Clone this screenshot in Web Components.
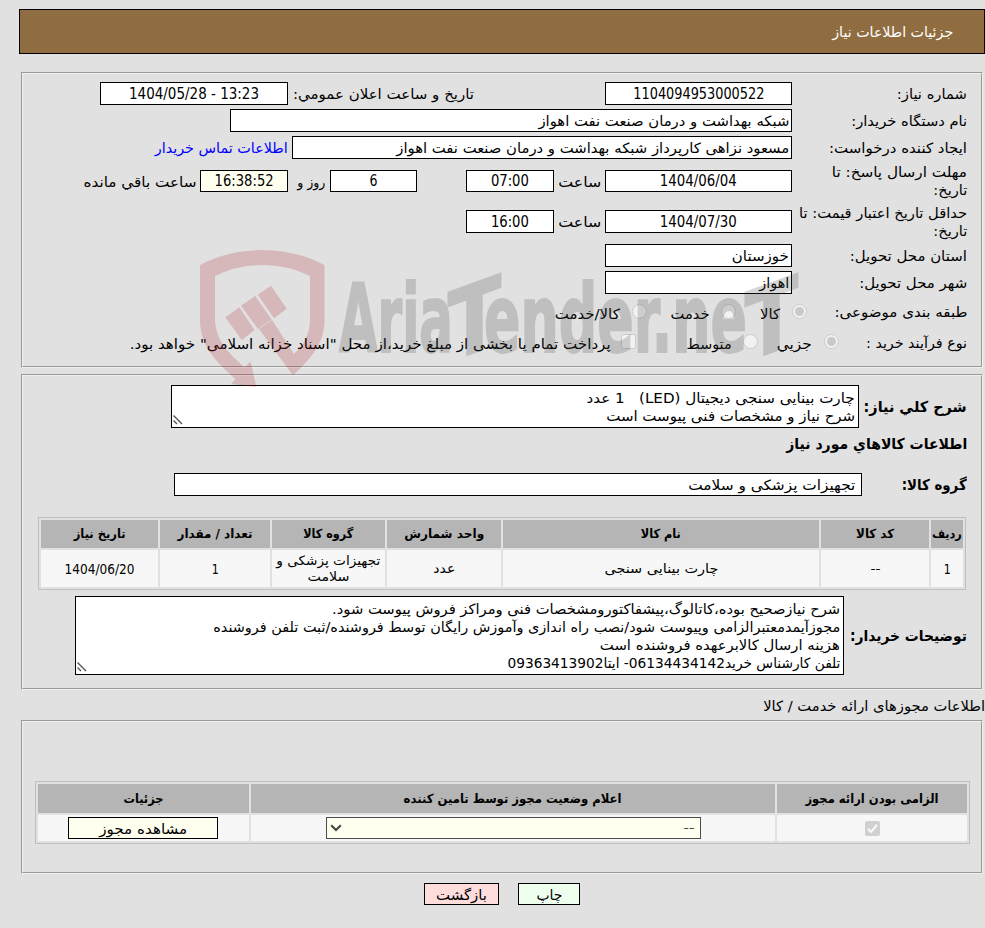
<!DOCTYPE html>
<html lang="fa" dir="rtl">
<head>
<meta charset="utf-8">
<title>جزئیات اطلاعات نیاز</title>
<style>
html,body{margin:0;padding:0;background:#e1e1e1}
body{width:985px;height:928px;overflow:hidden;position:relative;font:14px/18px "DejaVu Sans Condensed","DejaVu Sans","Noto Sans",sans-serif;color:#000}
</style>
</head>
<body>
<page-title><fit-text w="121">جزئیات اطلاعات نیاز</fit-text></page-title>

<group-box h="296" style="margin-top:18px">
  <form-row h="27" style="margin-top:6px">
    <form-label><fit-text w="70">شماره نیاز:</fit-text></form-label>
    <value-box w="187" center><fit-text size="15" w="131">1104094953000522</fit-text></value-box>
    <fit-text w="181" gap="131">تاریخ و ساعت اعلان عمومي:</fit-text>
    <value-box w="188" gap="5" center><fit-text size="15" w="130" dir="ltr">1404/05/28 - 13:23</fit-text></value-box>
  </form-row>
  <form-row h="27">
    <form-label><fit-text w="116">نام دستگاه خریدار:</fit-text></form-label>
    <value-box w="562"><fit-text w="251">شبکه بهداشت و درمان صنعت نفت اهواز</fit-text></value-box>
  </form-row>
  <form-row h="27">
    <form-label><fit-text w="138">ایجاد کننده درخواست:</fit-text></form-label>
    <value-box w="500"><fit-text w="393">مسعود نزاهی کارپرداز شبکه بهداشت و درمان صنعت نفت اهواز</fit-text></value-box>
    <fit-text w="133" gap="4" style="color:#00f">اطلاعات تماس خریدار</fit-text>
  </form-row>
  <form-row h="40">
    <form-label><fit-text w="135">مهلت ارسال پاسخ: تا</fit-text><fit-text w="34">تاریخ:</fit-text></form-label>
    <value-box w="187" h="22" center><fit-text size="15" w="77">1404/06/04</fit-text></value-box>
    <fit-text w="43" gap="4" dy="1">ساعت</fit-text>
    <value-box w="88" h="22" gap="4" center><fit-text size="15" w="38">07:00</fit-text></value-box>
    <value-box w="87" h="22" gap="49" center><fit-text size="15" w="8">6</fit-text></value-box>
    <fit-text w="28" gap="5" dy="1">روز و</fit-text>
    <value-box w="88" h="22" gap="9" center style="--fill:#fffff0"><fit-text size="15" w="59">16:38:52</fit-text></value-box>
    <fit-text w="113" gap="4" dy="1">ساعت باقي مانده</fit-text>
  </form-row>
  <form-row h="41">
    <form-label><fit-text w="168">حداقل تاریخ اعتبار قیمت: تا</fit-text><fit-text w="34">تاریخ:</fit-text></form-label>
    <value-box w="187" center><fit-text size="15" w="77" dy="1">1404/07/30</fit-text></value-box>
    <fit-text w="43" gap="4" dy="1">ساعت</fit-text>
    <value-box w="88" gap="4" center><fit-text size="15" w="38" dy="1">16:00</fit-text></value-box>
  </form-row>
  <form-row h="27">
    <form-label><fit-text w="117">استان محل تحویل:</fit-text></form-label>
    <value-box w="187"><fit-text w="57">خوزستان</fit-text></value-box>
  </form-row>
  <form-row h="27">
    <form-label><fit-text w="108">شهر محل تحویل:</fit-text></form-label>
    <value-box w="187"><fit-text w="30">اهواز</fit-text></value-box>
  </form-row>
  <form-row h="31">
    <fit-text w="133" dy="1">طبقه بندی موضوعی:</fit-text>
    <choice-mark gap="27" on></choice-mark><fit-text w="20" gap="12" dy="3">کالا</fit-text>
    <choice-mark gap="24"></choice-mark><fit-text w="39" gap="11" dy="3">خدمت</fit-text>
    <choice-mark gap="24"></choice-mark><fit-text w="65" gap="12" dy="3">کالا/خدمت</fit-text>
  </form-row>
  <form-row h="28">
    <fit-text w="101" dy="2">نوع فرآیند خرید :</fit-text>
    <choice-mark gap="27" on></choice-mark><fit-text w="35" gap="12" dy="4">جزیي</fit-text>
    <choice-mark gap="19"></choice-mark><fit-text w="45" gap="11" dy="4">متوسط</fit-text>
    <choice-mark gap="51" square></choice-mark><fit-text w="481" gap="10" dy="4">پرداخت تمام یا بخشی از مبلغ خرید،از محل "اسناد خزانه اسلامی" خواهد بود.</fit-text>
  </form-row>
</group-box>

<group-box h="316" style="margin-top:6px">
  <form-row h="43" style="margin-top:9px">
    <fit-text w="103" size="15" bold>شرح کلي نیاز:</fit-text>
    <note-area w="688" h="43" gap="5"><fit-text w="268">چارت بینایی سنجی دیجیتال (LED) &nbsp; 1 عدد</fit-text><fit-text w="249">شرح نیاز و مشخصات فنی پیوست است</fit-text></note-area>
  </form-row>
  <form-row h="31"><fit-text w="181" size="15" bold>اطلاعات کالاهاي مورد نیاز</fit-text></form-row>
  <form-row h="51">
    <fit-text w="65" size="15" bold>گروه کالا:</fit-text>
    <value-box w="688" gap="40" style="--pad:6px"><fit-text w="167">تجهیزات پزشکی و سلامت</fit-text></value-box>
  </form-row>
  <data-grid cols="32 108 316 114 113 110 117" rows="28 37" style="margin:7px 15px 0 0">
    <grid-cell head><fit-text w="30" size="12.5" bold>ردیف</fit-text></grid-cell>
    <grid-cell head><fit-text w="38" size="12.5" bold>کد کالا</fit-text></grid-cell>
    <grid-cell head><fit-text w="40" size="12.5" bold>نام کالا</fit-text></grid-cell>
    <grid-cell head><fit-text w="80" size="12.5" bold>واحد شمارش</fit-text></grid-cell>
    <grid-cell head><fit-text w="50" size="12.5" bold>گروه کالا</fit-text></grid-cell>
    <grid-cell head><fit-text w="75" size="12.5" bold>تعداد / مقدار</fit-text></grid-cell>
    <grid-cell head><fit-text w="52" size="12.5" bold>تاریخ نیاز</fit-text></grid-cell>
    <grid-cell><fit-text w="7" size="13.5">1</fit-text></grid-cell>
    <grid-cell><fit-text w="10" size="13">--</fit-text></grid-cell>
    <grid-cell><fit-text w="114" size="13">چارت بینایی سنجی</fit-text></grid-cell>
    <grid-cell><fit-text w="22" size="13">عدد</fit-text></grid-cell>
    <grid-cell><fit-text w="104" size="13" lh="16">تجهیزات پزشکی و</fit-text><fit-text w="42" size="13" lh="16">سلامت</fit-text></grid-cell>
    <grid-cell><fit-text w="7" size="13.5">1</fit-text></grid-cell>
    <grid-cell><fit-text w="70" size="13.5">1404/06/20</fit-text></grid-cell>
  </data-grid>
  <form-row h="79" style="margin-top:6px">
    <fit-text w="117" size="15" bold>توضیحات خریدار:</fit-text>
    <note-area w="769" h="79" gap="6"><fit-text w="508">شرح نیازصحیح بوده،کاتالوگ،پیشفاکتورومشخصات فنی ومراکز فروش پیوست شود.</fit-text><fit-text w="627">مجوزآیمدمعتبرالزامی وپیوست شود/نصب راه اندازی وآموزش رایگان توسط فروشنده/ثبت تلفن فروشنده</fit-text><fit-text w="240">هزینه ارسال کالابرعهده فروشنده است</fit-text><fit-text w="333">تلفن کارشناس خرید06134434142- ایتا09363413902</fit-text></note-area>
  </form-row>
</group-box>

<section-caption><fit-text w="222">اطلاعات مجوزهای ارائه خدمت / کالا</fit-text></section-caption>

<group-box h="154">
  <data-grid cols="190 524 211" rows="29 26" style="margin:59px 11px 0 0">
    <grid-cell head><fit-text w="133" size="12.5" bold>الزامی بودن ارائه مجوز</fit-text></grid-cell>
    <grid-cell head><fit-text w="218" size="12.5" bold>اعلام وضعیت مجوز توسط تامین کننده</fit-text></grid-cell>
    <grid-cell head><fit-text w="40" size="12.5" bold>جزئیات</fit-text></grid-cell>
    <grid-cell><choice-mark checked></choice-mark></grid-cell>
    <grid-cell><drop-list><fit-text w="11" size="13">--</fit-text></drop-list></grid-cell>
    <grid-cell style="padding-left:0;padding-right:1px"><push-button w="150" fill="#fffff0"><fit-text w="88">مشاهده مجوز</fit-text></push-button></grid-cell>
  </data-grid>
</group-box>

<button-bar>
  <push-button w="62" fill="#eeffee"><fit-text w="26">چاپ</fit-text></push-button>
  <push-button w="75" fill="#ffdddd"><fit-text w="51">بازگشت</fit-text></push-button>
</button-bar>

<brand-mark></brand-mark>

<script>
function define(name, css, html, setup) {
  const tpl = document.createElement('template');
  tpl.innerHTML = '<style>:host{box-sizing:border-box}' + css + '</style>' + html;
  customElements.define(name, class extends HTMLElement {
    connectedCallback() {
      if (this.shadowRoot) return;
      this.attachShadow({mode: 'open'}).append(tpl.content.cloneNode(true));
      const gap = this.getAttribute('gap');
      if (gap) this.style.marginInlineStart = gap + 'px';
      if (setup) setup(this, n => this.getAttribute(n));
    }
  });
}

define('page-title',
  ':host{display:flex;align-items:center;height:45px;margin:9px 0 0 19px;padding-inline-start:31px;border:1px solid #000;background:#8f6d40;color:#fff}',
  '<slot></slot>');

/* Panel with a two-tone engraved frame */
define('group-box',
  ':host{display:block;margin:0 2px 0 21px;border:1px solid;border-color:#9a9a9a #f0f0f0 #f0f0f0 #9a9a9a}' +
  '.in{box-sizing:border-box;display:flow-root;height:100%;border:1px solid;border-color:#f0f0f0 #9a9a9a #9a9a9a #f0f0f0}',
  '<div class="in"><slot></slot></div>',
  (el, a) => { el.style.height = a('h') + 'px'; });

define('form-row', ':host{display:flex;align-items:center;padding-inline-start:14px;white-space:nowrap}', '<slot></slot>',
  (el, a) => { el.style.height = a('h') + 'px'; });

define('form-label', ':host{display:flex;flex-direction:column;align-items:flex-start;flex:none;width:175px}', '<slot></slot>');

define('value-box',
  ':host{display:flex;flex:none;align-items:center;height:23px;border:1px solid #000;background:var(--fill,#fff);padding:0 var(--pad,2px)}:host([center]){justify-content:center}',
  '<slot></slot>',
  (el, a) => { el.style.width = a('w') + 'px'; if (a('h')) el.style.height = a('h') + 'px'; });

define('note-area',
  ':host{display:flex;flex-direction:column;align-items:flex-start;position:relative;flex:none;border:1px solid #000;background:#fff;padding:3px 3px 0}' +
  'svg{position:absolute;left:1px;bottom:2px}',
  '<slot></slot><svg width="10" height="10" viewBox="0 0 10 10" stroke="#555" stroke-width="1.4"><path d="M.5.5 9 9M.5 5.5 4 9"/></svg>',
  (el, a) => { el.style.width = a('w') + 'px'; el.style.height = a('h') + 'px'; });

define('data-grid',
  ':host{display:grid;width:max-content;gap:2px;padding:2px;border:1px solid #bfbfbf}', '<slot></slot>',
  (el, a) => {
    el.style.gridTemplateColumns = a('cols').split(' ').join('px ') + 'px';
    el.style.gridTemplateRows = a('rows').split(' ').join('px ') + 'px';
  });

define('grid-cell',
  ':host{display:flex;flex-direction:column;align-items:center;justify-content:center;background:#f7f7f7}:host([head]){background:#b5b5b5}',
  '<slot></slot>');

/* Disabled radio button or checkbox */
define('choice-mark',
  ':host{display:block;flex:none;width:15px;height:15px}svg{display:block}', '<svg width="15" height="15" viewBox="0 0 15 15"></svg>',
  (el, a) => {
    const svg = el.shadowRoot.querySelector('svg');
    if (a('checked') !== null)
      svg.innerHTML = '<rect width="15" height="15" rx="2" fill="#d0d0d0"/><path d="M3 7.8 6 11 12 3.8" fill="none" stroke="#fafafa" stroke-width="2"/>';
    else if (a('square') !== null)
      svg.innerHTML = '<rect x=".5" y=".5" width="14" height="14" rx="2" fill="#f2f2f2" stroke="#cbcbcb"/>';
    else
      svg.innerHTML = '<circle cx="7.5" cy="7.5" r="7" fill="#f2f2f2" stroke="#cbcbcb"/>' +
        (a('on') !== null ? '<circle cx="7.5" cy="7.5" r="4.5" fill="#c9c9c9"/>' : '');
  });

define('drop-list',
  ':host{display:flex;align-items:center;justify-content:space-between;width:375px;height:22px;border:1px solid #4c4c4c;background:#fffff0;color:#444;padding:0 5px 0 3px}',
  '<slot></slot><svg width="12" height="8" viewBox="0 0 12 8"><path d="M1.2 1.2 6 6 10.8 1.2" fill="none" stroke="#444" stroke-width="2"/></svg>');

define('push-button',
  'button{all:unset;box-sizing:border-box;display:flex;align-items:center;justify-content:center;width:100%;height:100%;padding-top:2px;border:1px solid #000;background:var(--fill)}:host{display:block;height:22px}',
  '<button type="button"><slot></slot></button>',
  (el, a) => { el.style.width = a('w') + 'px'; el.style.setProperty('--fill', a('fill')); });

define('section-caption', ':host{display:flex;align-items:center;height:30px;padding-top:1px}', '<slot></slot>');

define('button-bar', ':host{display:flex;gap:19px;margin-top:9px;padding-inline-start:405px}', '<slot></slot>');

define('brand-mark',
  ':host{position:absolute;left:195px;top:245px;width:610px;height:145px;pointer-events:none;direction:ltr}svg{display:block;overflow:visible}text{font-family:"DejaVu Sans Condensed","DejaVu Sans",sans-serif;font-weight:bold}',
  '<svg width="610" height="145" viewBox="195 245 610 145">' +
  '<g fill="#aa141e" fill-opacity=".2">' +
  '<path d="M200 265Q229 250 262 250Q296 250 324.500 265V320C324.500 345 309 360 293 375.500L259 329L272 320L294 354C303 346 310 335 310 320V276Q288 265 262 265Q237 265 215 276V320C216 342 230 354 244.500 367.500L250.500 361.500L256.500 387L231 384L235.500 379C215 361 200 345 200 320Z"/>' +
  '<path d="M271 285.700 286.700 308.700 274 318.300 257.700 294.700ZM255.300 296 271.500 319.500 258 329 241 305.700ZM239.300 307.300 254.500 330 241.700 340 225.300 317.300Z"/></g>' +
  '<g fill="#3c3c3c" stroke="#3c3c3c" stroke-width="2" opacity=".2">' +
  '<text x="339" y="352" font-size="94" textLength="114" lengthAdjust="spacingAndGlyphs">Aria</text>' +
  '<text transform="translate(448 303) skewY(-20)" x="0" y="59" font-size="95" textLength="53" lengthAdjust="spacingAndGlyphs">T</text>' +
  '<text x="484" y="352" font-size="94" textLength="263" lengthAdjust="spacingAndGlyphs">ender.ne</text>' +
  '<text transform="translate(745 304) skewY(-20)" x="0" y="58" font-size="95" textLength="53" lengthAdjust="spacingAndGlyphs">T</text>' +
  '</g></svg>');

/* One line of text, fitted horizontally to the width given by w */
define('fit-text',
  ':host{display:block;flex:none;white-space:pre;line-height:18px}span{display:inline-block;transform-origin:100% 50%}:host([dir=ltr]) span{transform-origin:0 50%}:host([bold]){font-weight:bold}',
  '<span><slot></slot></span>',
  (el, a) => {
    if (a('size')) el.style.fontSize = a('size') + 'px';
    if (a('lh')) el.style.lineHeight = a('lh') + 'px';
    if (a('dy')) el.style.paddingTop = a('dy') * 1.5 + 'px';
    const span = el.shadowRoot.querySelector('span');
    const w = +a('w'), natural = span.getBoundingClientRect().width;
    el.style.width = w + 'px';
    span.style.transform = 'scaleX(' + (w / natural) + ')';
  });
</script>
</body>
</html>
